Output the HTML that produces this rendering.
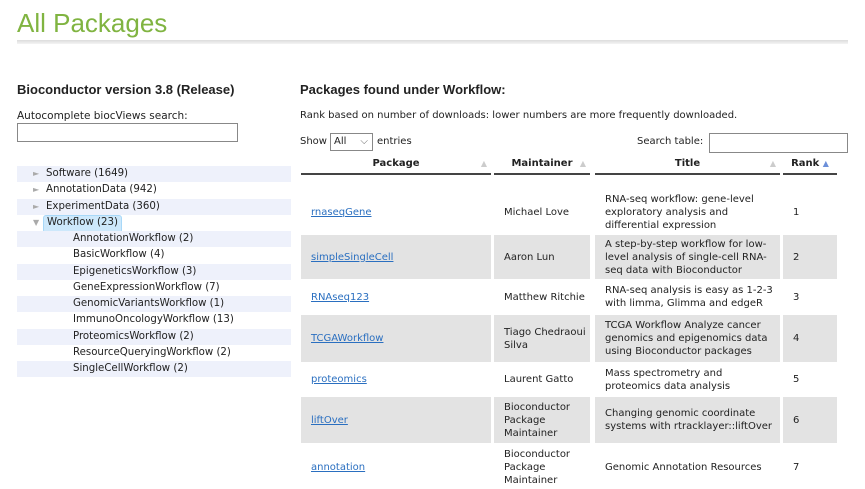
<!DOCTYPE html>
<html><head><meta charset="utf-8"><style>
body{margin:0;width:865px;height:489px;overflow:hidden;background:#fff;font-family:"DejaVu Sans",Verdana,sans-serif;font-size:10px;color:#222;position:relative}
.a{position:absolute;white-space:nowrap}
h1{position:absolute;left:17px;top:9px;margin:0;font:26px "Liberation Sans",Arial,sans-serif;color:#80b441;line-height:28px}
.rule{position:absolute;left:17px;top:40px;width:831px;height:4px;background:linear-gradient(#dcdcdc,#f4f4f4)}
.b{font-family:"Liberation Sans",Arial,sans-serif;font-weight:bold;font-size:13px}
.tr{position:absolute;left:17px;width:274px;height:16px;line-height:16px;font-size:10.2px}
.tr.s{background:#eef1fb}
.tr span.t{position:absolute;left:16px;color:#aaa;font-size:8px}
.c{position:absolute;display:flex;align-items:center;padding-left:10px;padding-right:4px;box-sizing:border-box;line-height:13px}
.g{background:#e3e3e3}
a{color:#2a6fc0;text-decoration:underline}
.h{position:absolute;top:155px;height:18px;border-bottom:2px solid #444;font-weight:bold;text-align:center;line-height:18px}
.arr{position:absolute;right:4px;top:0;color:#ccc;font-size:8px}
</style></head><body>
<h1>All Packages</h1>
<div class="rule"></div>
<div class="a b" style="left:17px;top:82px">Bioconductor version 3.8 (Release)</div>
<div class="a" style="left:17px;top:110px;font-size:10.5px">Autocomplete biocViews search:</div>
<div class="a" style="left:17px;top:123px;width:219px;height:17px;border:1px solid #888"></div>
<div class="tr s" style="top:166px"><span class="t">►</span><span class="a" style="left:29px">Software (1649)</span></div>
<div class="tr" style="top:182px"><span class="t">►</span><span class="a" style="left:29px">AnnotationData (942)</span></div>
<div class="tr s" style="top:199px"><span class="t">►</span><span class="a" style="left:29px">ExperimentData (360)</span></div>
<div class="tr" style="top:215px"><span class="t">▼</span><span class="a" style="left:26px;top:0;height:16px;padding:0 3px;background:#cde8fb;border-radius:3px;border:1px solid #a8d8f8;line-height:14px">Workflow (23)</span></div>
<div class="tr s" style="top:231px"><span class="a" style="left:56px">AnnotationWorkflow (2)</span></div>
<div class="tr" style="top:247px"><span class="a" style="left:56px">BasicWorkflow (4)</span></div>
<div class="tr s" style="top:264px"><span class="a" style="left:56px">EpigeneticsWorkflow (3)</span></div>
<div class="tr" style="top:280px"><span class="a" style="left:56px">GeneExpressionWorkflow (7)</span></div>
<div class="tr s" style="top:296px"><span class="a" style="left:56px">GenomicVariantsWorkflow (1)</span></div>
<div class="tr" style="top:312px"><span class="a" style="left:56px">ImmunoOncologyWorkflow (13)</span></div>
<div class="tr s" style="top:329px"><span class="a" style="left:56px">ProteomicsWorkflow (2)</span></div>
<div class="tr" style="top:345px"><span class="a" style="left:56px">ResourceQueryingWorkflow (2)</span></div>
<div class="tr s" style="top:361px"><span class="a" style="left:56px">SingleCellWorkflow (2)</span></div>

<div class="a b" style="left:300px;top:82px">Packages found under Workflow:</div>
<div class="a" style="left:300px;top:110px">Rank based on number of downloads: lower numbers are more frequently downloaded.</div>
<div class="a" style="left:300px;top:136px">Show</div>
<div class="a" style="left:330px;top:133px;width:38px;height:16px;border:1px solid #888;line-height:16px;padding-left:3px">All <span style="position:absolute;right:4px;color:#666">⌵</span></div>
<div class="a" style="left:377px;top:136px">entries</div>
<div class="a" style="left:637px;top:136px">Search table:</div>
<div class="a" style="left:709px;top:133px;width:137px;height:18px;border:1px solid #888"></div>

<div class="h" style="left:301px;width:190px">Package<span class="arr">▲</span></div>
<div class="h" style="left:494px;width:96px">Maintainer<span class="arr">▲</span></div>
<div class="h" style="left:595px;width:185px">Title<span class="arr">▲</span></div>
<div class="h" style="left:783px;width:54px">Rank <span style="color:#6c8fd9;font-size:8px;vertical-align:top">▲</span></div>

<div class="c" style="left:301px;top:192px;width:190px;height:41px"><a>rnaseqGene</a></div>
<div class="c" style="left:494px;top:192px;width:96px;height:41px">Michael Love</div>
<div class="c" style="left:595px;top:192px;width:185px;height:41px">RNA-seq workflow: gene-level exploratory analysis and differential expression</div>
<div class="c" style="left:783px;top:192px;width:54px;height:41px">1</div>

<div class="c g" style="left:301px;top:235px;width:190px;height:44px"><a>simpleSingleCell</a></div>
<div class="c g" style="left:494px;top:235px;width:96px;height:44px">Aaron Lun</div>
<div class="c g" style="left:595px;top:235px;width:185px;height:44px">A step-by-step workflow for low-level analysis of single-cell RNA-seq data with Bioconductor</div>
<div class="c g" style="left:783px;top:235px;width:54px;height:44px">2</div>

<div class="c" style="left:301px;top:281px;width:190px;height:32px"><a>RNAseq123</a></div>
<div class="c" style="left:494px;top:281px;width:96px;height:32px">Matthew Ritchie</div>
<div class="c" style="left:595px;top:281px;width:185px;height:32px">RNA-seq analysis is easy as 1-2-3 with limma, Glimma and edgeR</div>
<div class="c" style="left:783px;top:281px;width:54px;height:32px">3</div>

<div class="c g" style="left:301px;top:315px;width:190px;height:47px"><a>TCGAWorkflow</a></div>
<div class="c g" style="left:494px;top:315px;width:96px;height:47px">Tiago Chedraoui Silva</div>
<div class="c g" style="left:595px;top:315px;width:185px;height:47px">TCGA Workflow Analyze cancer genomics and epigenomics data using Bioconductor packages</div>
<div class="c g" style="left:783px;top:315px;width:54px;height:47px">4</div>

<div class="c" style="left:301px;top:364px;width:190px;height:31px"><a>proteomics</a></div>
<div class="c" style="left:494px;top:364px;width:96px;height:31px">Laurent Gatto</div>
<div class="c" style="left:595px;top:364px;width:185px;height:31px">Mass spectrometry and proteomics data analysis</div>
<div class="c" style="left:783px;top:364px;width:54px;height:31px">5</div>

<div class="c g" style="left:301px;top:397px;width:190px;height:46px"><a>liftOver</a></div>
<div class="c g" style="left:494px;top:397px;width:96px;height:46px">Bioconductor Package Maintainer</div>
<div class="c g" style="left:595px;top:397px;width:185px;height:46px">Changing genomic coordinate systems with rtracklayer::liftOver</div>
<div class="c g" style="left:783px;top:397px;width:54px;height:46px">6</div>

<div class="c" style="left:301px;top:445px;width:190px;height:44px"><a>annotation</a></div>
<div class="c" style="left:494px;top:445px;width:96px;height:44px">Bioconductor Package Maintainer</div>
<div class="c" style="left:595px;top:445px;width:185px;height:44px">Genomic Annotation Resources</div>
<div class="c" style="left:783px;top:445px;width:54px;height:44px">7</div>
</body></html>
